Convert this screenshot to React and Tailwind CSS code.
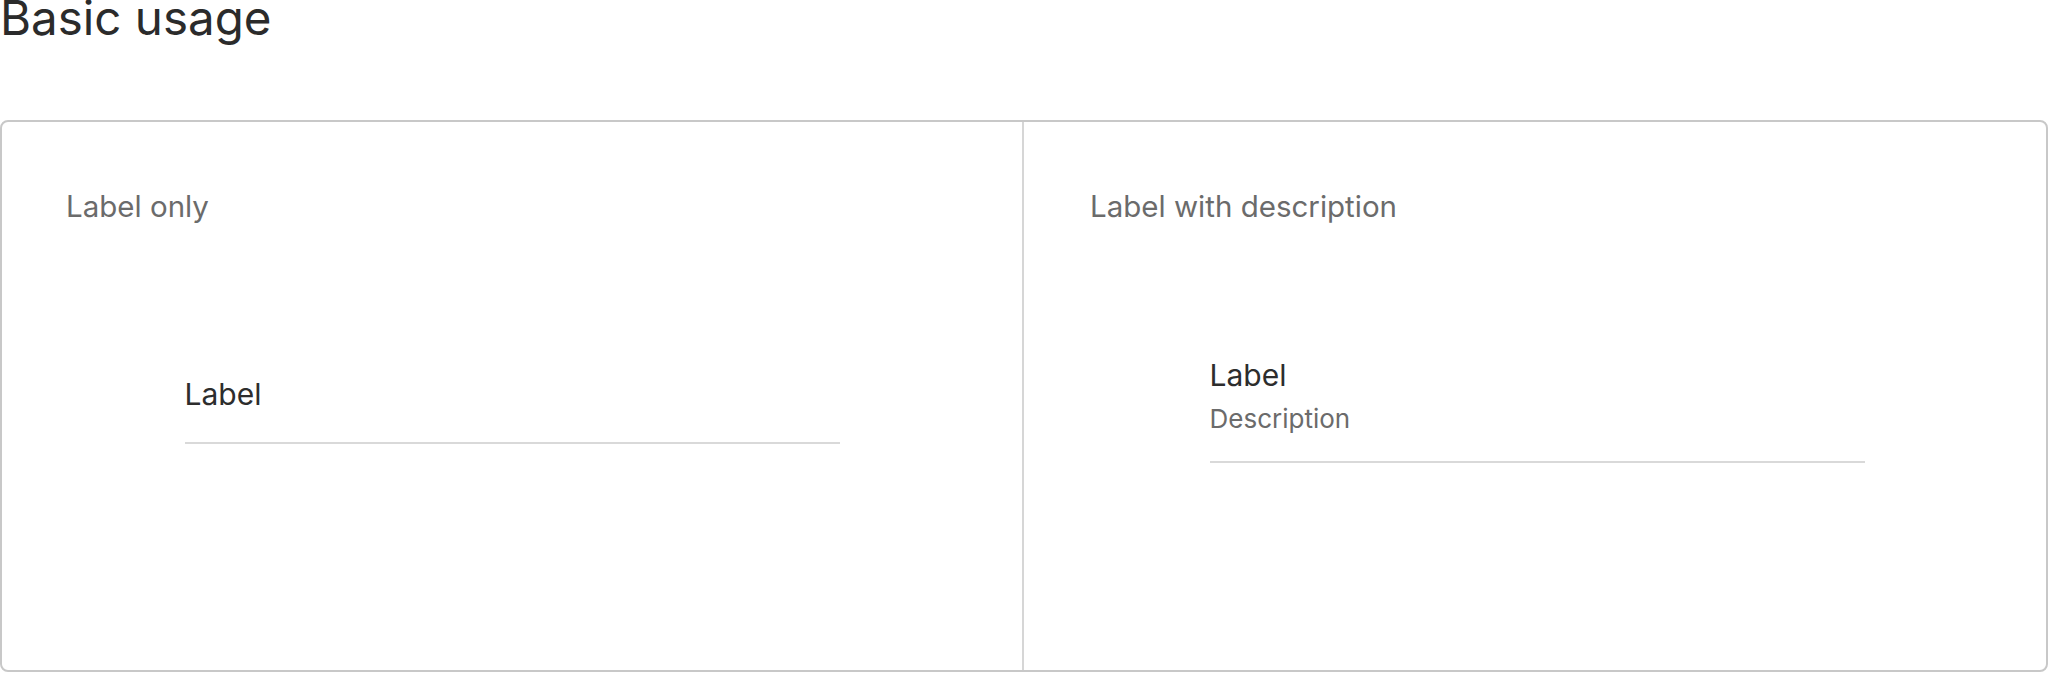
import React from 'react';

const ListItem = ({ label, description }) => (
  <div className={`w-[655px] border-b-2 border-[#d9d9d9] ${description ? 'pb-[26px]' : 'pb-[30px]'}`}>
    <p className="text-[30px] leading-[36px] text-[#2d2d2d]">{label}</p>
    {description && (
      <p className="mt-[10px] text-[26px] leading-[32px] text-[#6b6b6b]">{description}</p>
    )}
  </div>
);

const Panel = ({ title, children, divider }) => (
  <div
    className={`flex flex-col pt-[66px] pb-[74px] ${
      divider ? 'border-r-2 border-[#d6d6d6] pl-[64px] pr-[64px]' : 'pl-[66px] pr-[62px]'
    }`}
  >
    <h3 className="text-[29.5px] leading-[36px] text-[#6b6b6b]">{title}</h3>
    <div className="flex flex-1 items-center justify-center">{children}</div>
  </div>
);

export default function App() {
  return (
    <div className="w-[2048px] h-[674px] overflow-hidden bg-white font-['Inter',sans-serif]">
      <h2 className="mt-[-6px] text-[47.5px] leading-none text-[#2b2b2b]">Basic usage</h2>
      <div className="mt-[78px] grid h-[552px] grid-cols-2 rounded-lg border-2 border-[#c8c8c8]">
        <Panel title="Label only" divider>
          <ListItem label="Label" />
        </Panel>
        <Panel title="Label with description">
          <ListItem label="Label" description="Description" />
        </Panel>
      </div>
    </div>
  );
}
